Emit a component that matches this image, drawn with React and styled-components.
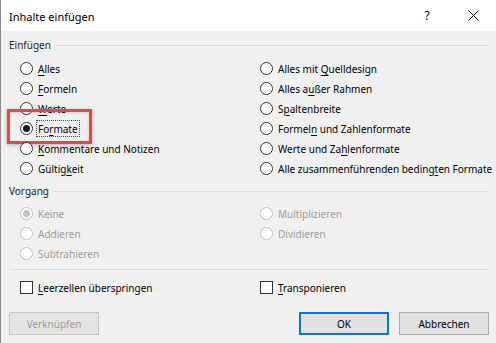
import React from 'react';
import styled, { createGlobalStyle } from 'styled-components';

const GlobalStyle = createGlobalStyle`
  html, body {
    margin: 0;
    padding: 0;
    background: #f0f0f0;
  }
  * {
    box-sizing: border-box;
  }
`;

const Window = styled.div`
  width: 496px;
  height: 343px;
  background: #f0f0f0;
  border-left: 1px solid #8c8c8c;
  font-family: 'Noto Sans', 'Open Sans', sans-serif;
  font-size: 10px;
  color: #000;
  display: flex;
  flex-direction: column;
  overflow: hidden;
`;

const TitleBar = styled.div`
  height: 31px;
  background: #fff;
  display: flex;
  align-items: center;
  padding-left: 8px;
`;

const Title = styled.div`
  flex: 1;
  font-size: 11px;
  padding-top: 1px;
`;

const TitleButton = styled.div`
  width: 46px;
  height: 31px;
  display: flex;
  align-items: center;
  justify-content: center;
  font-size: 12px;
`;

const Body = styled.div`
  flex: 1;
  padding: 6px 7px 0 8px;
  display: flex;
  flex-direction: column;
`;

const GroupHeader = styled.div`
  height: 16px;
  display: flex;
  align-items: center;
  gap: 5px;
  margin-top: ${p => p.$mt || 0}px;
  color: #222;

  &::after {
    content: '';
    flex: 1;
    height: 1px;
    background: #dcdcdc;
  }
`;

const OptionGrid = styled.div`
  display: grid;
  grid-template-columns: 240px 1fr;
  grid-auto-flow: column;
  grid-template-rows: repeat(${p => p.$rows}, 20px);
  padding-left: 11px;
  margin-top: ${p => p.$mt || 0}px;
`;

const Option = styled.label`
  position: relative;
  height: 20px;
  display: flex;
  align-items: center;
  gap: 3px;
  color: ${p => (p.$disabled ? '#9d9d9d' : '#000')};
  white-space: nowrap;
`;

const RadioMark = styled.span`
  width: 13px;
  height: 13px;
  border-radius: 50%;
  border: 1px solid ${p => (p.$disabled ? '#c2c2c2' : '#333')};
  background: #fff;
  display: flex;
  align-items: center;
  justify-content: center;
  flex-shrink: 0;

  &::after {
    content: '';
    display: ${p => (p.$checked ? 'block' : 'none')};
    width: 7px;
    height: 7px;
    border-radius: 50%;
    background: ${p => (p.$disabled ? '#c2c2c2' : '#1a1a1a')};
  }
`;

const CheckMark = styled.span`
  width: 13px;
  height: 13px;
  border: 1px solid #333;
  background: #fff;
  flex-shrink: 0;
`;

const Text = styled.span`
  padding: 1px 1px 0;
  border: 1px dotted ${p => (p.$focused ? '#444' : 'transparent')};
  line-height: 14px;
`;

const Key = styled.span`
  text-decoration: underline;
  text-underline-offset: 2px;
`;

const Highlight = styled.div`
  position: absolute;
  left: -13px;
  top: -9px;
  width: 85px;
  height: 35px;
  border: 3px solid #e84545;
  box-shadow: 0 1px 4px rgba(0, 0, 0, 0.25), inset 0 1px 3px rgba(0, 0, 0, 0.15);
  pointer-events: none;
`;

const Separator = styled.div`
  height: 1px;
  background: #dcdcdc;
  margin-top: 6px;
`;

const ButtonRow = styled.div`
  display: flex;
  justify-content: space-between;
  margin-top: 15px;
`;

const ButtonGroup = styled.div`
  display: flex;
  gap: 10px;
`;

const Button = styled.div`
  width: 90px;
  height: 23px;
  display: flex;
  align-items: center;
  justify-content: center;
  background: ${p => (p.$disabled ? '#e3e3e3' : '#e1e1e1')};
  border: 1px solid ${p => (p.$default ? '#0078d7' : p.$disabled ? '#c4c4c4' : '#adadad')};
  box-shadow: ${p => (p.$default ? 'inset 0 0 0 1px #0078d7' : 'none')};
  color: ${p => (p.$disabled ? '#9d9d9d' : '#000')};
`;

const label = (text, key) => {
  if (key == null) return text;
  return (
    <>
      {text.slice(0, key)}
      <Key>{text[key]}</Key>
      {text.slice(key + 1)}
    </>
  );
};

const Radio = ({ text, k, checked, disabled, focused, highlight }) => (
  <Option $disabled={disabled}>
    {highlight && <Highlight />}
    <RadioMark $checked={checked} $disabled={disabled} />
    <Text $focused={focused}>{label(text, k)}</Text>
  </Option>
);

const Check = ({ text, k }) => (
  <Option>
    <CheckMark />
    <Text>{label(text, k)}</Text>
  </Option>
);

const pasteOptions = [
  { text: 'Alles', k: 0 },
  { text: 'Formeln', k: 0 },
  { text: 'Werte', k: 0 },
  { text: 'Formate', k: 2, checked: true, focused: true, highlight: true },
  { text: 'Kommentare und Notizen', k: 0 },
  { text: 'Gültigkeit', k: 6 },
  { text: 'Alles mit Quelldesign', k: 10 },
  { text: 'Alles außer Rahmen', k: 7 },
  { text: 'Spaltenbreite', k: 1 },
  { text: 'Formeln und Zahlenformate', k: 6 },
  { text: 'Werte und Zahlenformate', k: 12 },
  { text: 'Alle zusammenführenden bedingten Formate', k: 29 },
];

const operations = [
  { text: 'Keine', checked: true },
  { text: 'Addieren' },
  { text: 'Subtrahieren' },
  { text: 'Multiplizieren' },
  { text: 'Dividieren' },
];

export default function App() {
  return (
    <>
      <GlobalStyle />
      <Window>
        <TitleBar>
          <Title>Inhalte einfügen</Title>
          <TitleButton>?</TitleButton>
          <TitleButton>
            <svg width="11" height="11" viewBox="0 0 11 11">
              <path d="M0.5 0.5 L10.5 10.5 M10.5 0.5 L0.5 10.5" stroke="#000" strokeWidth="1" />
            </svg>
          </TitleButton>
        </TitleBar>
        <Body>
          <GroupHeader>Einfügen</GroupHeader>
          <OptionGrid $rows={6} $mt={5}>
            {pasteOptions.map(o => (
              <Radio key={o.text} {...o} />
            ))}
          </OptionGrid>
          <GroupHeader $mt={5}>Vorgang</GroupHeader>
          <OptionGrid $rows={3} $mt={4}>
            {operations.map(o => (
              <Radio key={o.text} {...o} disabled />
            ))}
          </OptionGrid>
          <Separator />
          <OptionGrid $rows={1} $mt={7}>
            <Check text="Leerzellen überspringen" k={0} />
            <Check text="Transponieren" k={0} />
          </OptionGrid>
          <ButtonRow>
            <Button $disabled>Verknüpfen</Button>
            <ButtonGroup>
              <Button $default>OK</Button>
              <Button>Abbrechen</Button>
            </ButtonGroup>
          </ButtonRow>
        </Body>
      </Window>
    </>
  );
}
